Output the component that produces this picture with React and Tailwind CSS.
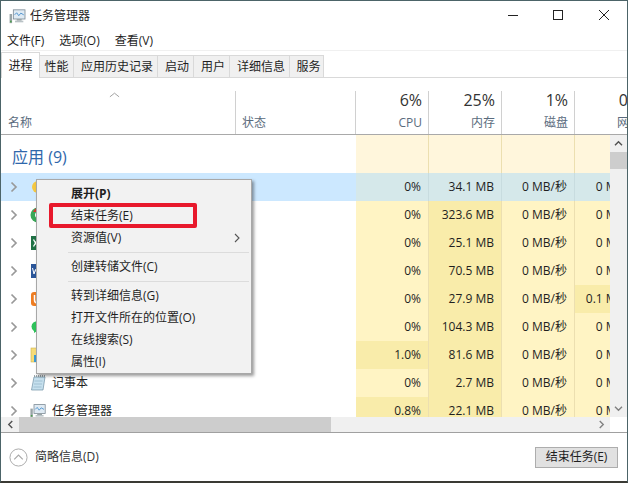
const FONT = "font-['Open_Sans','Noto_Sans_CJK_SC',sans-serif]";

const rows = [
  { name: "", cpu: "0%", mem: "34.1 MB", disk: "0 MB/秒", net: "0 Mbps", selected: true, icon: "yellow" },
  { name: "", cpu: "0%", mem: "323.6 MB", disk: "0 MB/秒", net: "0 Mbps", memDark: true, icon: "chrome" },
  { name: "", cpu: "0%", mem: "25.1 MB", disk: "0 MB/秒", net: "0 Mbps", memDark: true, icon: "excel" },
  { name: "", cpu: "0%", mem: "70.5 MB", disk: "0 MB/秒", net: "0 Mbps", memDark: true, icon: "word" },
  { name: "", cpu: "0%", mem: "27.9 MB", disk: "0 MB/秒", net: "0.1 Mbps", memDark: true, netDark: true, icon: "orange" },
  { name: "", cpu: "0%", mem: "104.3 MB", disk: "0 MB/秒", net: "0 Mbps", memDark: true, icon: "wechat" },
  { name: "", cpu: "1.0%", mem: "81.6 MB", disk: "0 MB/秒", net: "0 Mbps", memDark: true, cpuDark: true, icon: "folder" },
  { name: "记事本", cpu: "0%", mem: "2.7 MB", disk: "0 MB/秒", net: "0 Mbps", memDark: true, icon: "notepad" },
  { name: "任务管理器", cpu: "0.8%", mem: "22.1 MB", disk: "0 MB/秒", net: "0 Mbps", memDark: true, cpuDark: true, icon: "taskmgr" },
];

function TaskIcon({ className }) {
  return (
    <svg viewBox="0 0 20 18" className={className}>
      <rect x="0.5" y="6" width="3" height="11" fill="#9aa5a8" />
      <rect x="1" y="14" width="2" height="2" fill="#4d9e4d" />
      <rect x="5" y="1" width="14" height="11" fill="#dfeaf3" stroke="#7d8b96" />
      <path d="M6.5 7 L9 4.5 L11.5 8 L14 5 L17.5 7" fill="none" stroke="#3a86c8" strokeWidth="1" />
      <rect x="9" y="12" width="6" height="2" fill="#9aa5a8" />
      <rect x="7" y="14" width="10" height="2" fill="#b9c2c6" />
    </svg>
  );
}

function RowIcon({ type }) {
  const c = "w-4 h-4 shrink-0";
  switch (type) {
    case "yellow":
      return (
        <svg viewBox="0 0 16 16" className={c}>
          <circle cx="8" cy="8" r="6" fill="#f5c842" />
        </svg>
      );
    case "chrome":
      return (
        <svg viewBox="0 0 16 16" className={c}>
          <circle cx="8" cy="8" r="7.5" fill="#3aa757" />
          <path d="M8 .5A7.5 7.5 0 0 1 15 5H3A7.5 7.5 0 0 1 8 .5Z" fill="#d9382e" />
          <circle cx="8" cy="8" r="3" fill="#fff" />
        </svg>
      );
    case "excel":
      return (
        <svg viewBox="0 0 16 16" className={c}>
          <rect x="1" y="1" width="14" height="14" fill="#1f7145" />
          <path d="M3.5 4.5 L7.5 11.5 M7.5 4.5 L3.5 11.5" stroke="#fff" strokeWidth="1.3" />
        </svg>
      );
    case "word":
      return (
        <svg viewBox="0 0 16 16" className={c}>
          <rect x="1" y="1" width="14" height="14" fill="#2b5699" />
          <path d="M2.5 5 L4 11 L5.5 6.5 L7 11 L8.5 5" fill="none" stroke="#fff" strokeWidth="1" />
        </svg>
      );
    case "orange":
      return (
        <svg viewBox="0 0 16 16" className={c}>
          <rect x="1" y="1" width="14" height="14" rx="3" fill="#ee7d22" />
          <path d="M4.5 4 V9 A3 3 0 0 0 10.5 9 V4" fill="none" stroke="#fff" strokeWidth="1.5" />
        </svg>
      );
    case "wechat":
      return (
        <svg viewBox="0 0 16 16" className={c}>
          <ellipse cx="8" cy="7.5" rx="6.5" ry="5.5" fill="#2fc25b" />
          <path d="M4 11 L4 14 L7 12 Z" fill="#2fc25b" />
        </svg>
      );
    case "folder":
      return (
        <svg viewBox="0 0 16 16" className={c}>
          <rect x="1" y="1" width="13" height="14" fill="#f7dc78" stroke="#cdb44f" strokeWidth="0.6" />
          <rect x="4" y="8" width="6" height="7" fill="#3b9ad6" />
        </svg>
      );
    case "notepad":
      return (
        <svg viewBox="0 0 16 16" className={c}>
          <path d="M4 2 H15 L13 15 H1.5 Z" fill="#c6e0ee" stroke="#6f8fa3" strokeWidth="0.7" />
          <path d="M4 1 H15" stroke="#7f8c93" strokeWidth="1.4" strokeDasharray="1 1" />
          <path d="M4.5 6 H12.5 M4 9 H12 M3.5 12 H11.5" stroke="#8fb2c6" strokeWidth="0.7" />
        </svg>
      );
    default:
      return <TaskIcon className={c} />;
  }
}

function Chevron() {
  return (
    <svg viewBox="0 0 8 12" className="w-2 h-3 shrink-0">
      <path d="M1.5 1.5 L6 6 L1.5 10.5" fill="none" stroke="#999999" strokeWidth="1.7" />
    </svg>
  );
}

function Cell({ width, bg, border = "border-[#ecdcaa]", children }) {
  return (
    <div className={`${width} ${bg} ${border} h-full shrink-0 border-r flex items-center justify-end pr-[7px] text-[12px] text-[#1f1f1f] whitespace-nowrap`}>
      {children}
    </div>
  );
}

function Row({ r }) {
  const base = r.selected ? "bg-[#d5e8ea]" : "bg-[#fff4c4]";
  const dark = r.selected ? "bg-[#d5e8ea]" : "bg-[#f9ecaa]";
  const border = r.selected ? "border-[#c8dcdf]" : "border-[#ecdfb0]";
  return (
    <div className="flex h-[28px] shrink-0">
      <div className={`w-[355px] shrink-0 flex items-center pl-[9px] ${r.selected ? "bg-[#cce8ff]" : "bg-white"}`}>
        <Chevron />
        <div className="w-[12px]" />
        <div className="w-[22px] flex justify-start">
          <RowIcon type={r.icon} />
        </div>
        <span className="text-[12px] text-[#1f1f1f]">{r.name}</span>
      </div>
      <Cell width="w-[73px]" bg={r.cpuDark ? dark : base} border={border}>{r.cpu}</Cell>
      <Cell width="w-[73px]" bg={r.memDark ? dark : base} border={border}>{r.mem}</Cell>
      <Cell width="w-[73px]" bg={base} border={border}>{r.disk}</Cell>
      <div className={`w-[73px] shrink-0 h-full flex items-center justify-end pr-[11px] text-[12px] text-[#1f1f1f] whitespace-nowrap ${r.netDark ? dark : base}`}>
        {r.net}
      </div>
    </div>
  );
}

function HeadCol({ big, small, last }) {
  return (
    <div className="w-[73px] shrink-0 h-full relative pr-[7px] text-right">
      {!last && <div className="absolute right-0 top-[13px] bottom-0 w-px bg-[#d0d0d0]" />}
      <div className="text-[16px] leading-[20px] pt-[12px] text-[#333] whitespace-nowrap">{big}</div>
      <div className="text-[12px] leading-[16px] mt-[5px] text-[#5a6b7d] whitespace-nowrap">{small}</div>
    </div>
  );
}

function Tab({ children, active, width }) {
  return active ? (
    <div className={`${width} h-[26px] flex items-center justify-center bg-white border-t border-x border-[#d9d9d9] text-[12px] text-[#1f1f1f] -mb-px z-10 mt-[-2px]`}>
      {children}
    </div>
  ) : (
    <div className={`${width} h-[22px] pt-[1px] flex items-center justify-center bg-[#f0f0f0] border-t border-r border-[#d9d9d9] text-[12px] text-[#1f1f1f]`}>
      {children}
    </div>
  );
}

function MenuItem({ children, bold, arrow }) {
  return (
    <div className={`h-[22px] flex items-center pl-[34px] pr-[11px] text-[12px] text-[#1f1f1f] whitespace-nowrap ${bold ? "font-bold" : ""}`}>
      <span className="flex-1">{children}</span>
      {arrow && (
        <svg viewBox="0 0 6 10" className="w-[6px] h-[10px]">
          <path d="M1 1 L5 5 L1 9" fill="none" stroke="#555" strokeWidth="1.1" />
        </svg>
      )}
    </div>
  );
}

function MenuSep() {
  return <div className="h-px bg-[#dcdcdc] ml-[31px] mr-[2px] my-[3px]" />;
}

export default function App() {
  return (
    <div className={`${FONT} relative w-[628px] h-[483px] bg-white overflow-hidden flex flex-col border-t border-x border-[#4c6468] border-b-2 border-b-[#3a3a34]`}>
      {/* Title bar */}
      <div className="h-[30px] shrink-0 flex items-center pl-[8px]">
        <TaskIcon className="w-[17px] h-[15px]" />
        <span className="ml-[4px] text-[12px] text-[#1f1f1f]">任务管理器</span>
        <div className="flex-1" />
        <div className="flex items-center">
          <svg viewBox="0 0 46 30" className="w-[46px] h-[30px]"><path d="M19 14.5H29" stroke="#222" /></svg>
          <svg viewBox="0 0 46 30" className="w-[46px] h-[30px]"><rect x="18.5" y="9.5" width="9" height="9" fill="none" stroke="#222" /></svg>
          <svg viewBox="0 0 46 30" className="w-[46px] h-[30px]"><path d="M18 9 L28 19 M28 9 L18 19" stroke="#222" /></svg>
        </div>
      </div>
      {/* Menu bar */}
      <div className="h-[20px] shrink-0 flex items-center pl-[6px] gap-[15px] text-[12px] text-[#1f1f1f] border-b border-[#f0f0f0]">
        <span>文件(F)</span>
        <span>选项(O)</span>
        <span>查看(V)</span>
      </div>
      {/* Tabs */}
      <div className="h-[27px] shrink-0 flex items-end border-b border-[#d9d9d9]">
        <Tab active width="w-[39px]">进程</Tab>
        <Tab width="w-[34px]">性能</Tab>
        <Tab width="w-[84px] pl-[3px]">应用历史记录</Tab>
        <Tab width="w-[36px] pl-[3px]">启动</Tab>
        <Tab width="w-[36px] pl-[3px]">用户</Tab>
        <Tab width="w-[60px] pl-[3px]">详细信息</Tab>
        <Tab width="w-[34px] pl-[4px]">服务</Tab>
      </div>
      {/* Column header */}
      <div className="h-[57px] shrink-0 flex border-b border-[#a9a9a9]">
        <div className="w-[235px] shrink-0 relative pl-[7px]">
          <div className="absolute right-0 top-[13px] bottom-0 w-px bg-[#d0d0d0]" />
          <svg viewBox="0 0 12 6" className="absolute left-[108px] top-[14px] w-[11px] h-[6px]">
            <path d="M1 5 L6 1 L11 5" fill="none" stroke="#9a9a9a" strokeWidth="1" />
          </svg>
          <div className="text-[12px] leading-[16px] mt-[37px] text-[#5a6b7d]">名称</div>
        </div>
        <div className="w-[120px] shrink-0 relative pl-[6px]">
          <div className="absolute right-0 top-[13px] bottom-0 w-px bg-[#d0d0d0]" />
          <div className="text-[12px] leading-[16px] mt-[37px] text-[#5a6b7d]">状态</div>
        </div>
        <HeadCol big="6%" small="CPU" />
        <HeadCol big="25%" small="内存" />
        <HeadCol big="1%" small="磁盘" />
        <HeadCol big="0%" small="网络" last />
      </div>
      {/* Body */}
      <div className="flex-1 min-h-0 flex">
        <div className="flex-1 min-w-0 flex flex-col">
          <div className="flex-1 min-h-0 overflow-hidden flex flex-col">
            <div className="flex h-[38px] shrink-0">
              <div className="w-[355px] shrink-0 flex items-center pl-[11px] pt-[6px] text-[16px] text-[#2f67ab]">应用 (9)</div>
              <div className="w-[73px] shrink-0 bg-[#fff6dc] border-r border-[#ecdfb0]" />
              <div className="w-[73px] shrink-0 bg-[#fff6dc] border-r border-[#ecdfb0]" />
              <div className="w-[73px] shrink-0 bg-[#fff6dc] border-r border-[#ecdfb0]" />
              <div className="w-[73px] shrink-0 bg-[#fff6dc]" />
            </div>
            {rows.map((r, i) => (
              <Row key={i} r={r} />
            ))}
          </div>
          {/* Horizontal scrollbar */}
          <div className="h-[15px] shrink-0 flex items-center bg-[#f0f0f0]">
            <div className="w-[18px] flex justify-center">
              <svg viewBox="0 0 8 10" className="w-[7px] h-[9px]"><path d="M6 1 L2 5 L6 9" fill="none" stroke="#505050" strokeWidth="1.6" /></svg>
            </div>
            <div className="w-[312px] h-full bg-[#cdcdcd]" />
            <div className="flex-1" />
            <div className="w-[18px] flex justify-center">
              <svg viewBox="0 0 8 10" className="w-[7px] h-[9px]"><path d="M2 1 L6 5 L2 9" fill="none" stroke="#808080" strokeWidth="1.6" /></svg>
            </div>
          </div>
        </div>
        {/* Vertical scrollbar */}
        <div className="w-[17px] shrink-0 flex flex-col bg-[#f0f0f0]">
          <div className="h-[17px] flex items-center justify-center">
            <svg viewBox="0 0 10 8" className="w-[9px] h-[7px]"><path d="M1 6 L5 2 L9 6" fill="none" stroke="#505050" strokeWidth="1.6" /></svg>
          </div>
          <div className="h-[17px] bg-[#cdcdcd]" />
          <div className="flex-1" />
          <div className="h-[17px] pb-[1px] flex items-center justify-center">
            <svg viewBox="0 0 10 8" className="w-[9px] h-[7px]"><path d="M1 2 L5 6 L9 2" fill="none" stroke="#808080" strokeWidth="1.6" /></svg>
          </div>
          <div className="h-[15px] bg-white" />
        </div>
      </div>
      {/* Footer */}
      <div className="h-[49px] shrink-0 border-t border-[#a0a0a0] flex items-center pl-[8px] pr-[9px]">
        <svg viewBox="0 0 20 20" className="w-[19px] h-[19px]">
          <circle cx="10" cy="10" r="9" fill="none" stroke="#a8a8a8" />
          <path d="M5.5 12 L10 7.5 L14.5 12" fill="none" stroke="#a8a8a8" strokeWidth="1.2" />
        </svg>
        <span className="ml-[7px] text-[12px] text-[#333]">简略信息(D)</span>
        <div className="flex-1" />
        <div className="w-[83px] h-[21px] bg-[#e1e1e1] border border-[#adadad] flex items-center justify-center text-[12px] text-[#1f1f1f] whitespace-nowrap">
          结束任务(E)
        </div>
      </div>
      {/* Context menu */}
      <div className="absolute left-[35px] top-[178px] w-[216px] bg-[#f2f2f2] border border-[#a8a8a8] shadow-[2px_2px_3px_rgba(0,0,0,0.4)] pt-[3px]">
        <MenuItem bold>展开(P)</MenuItem>
        <MenuItem>结束任务(E)</MenuItem>
        <MenuItem arrow>资源值(V)</MenuItem>
        <MenuSep />
        <MenuItem>创建转储文件(C)</MenuItem>
        <MenuSep />
        <MenuItem>转到详细信息(G)</MenuItem>
        <MenuItem>打开文件所在的位置(O)</MenuItem>
        <MenuItem>在线搜索(S)</MenuItem>
        <MenuItem>属性(I)</MenuItem>
      </div>
      {/* Red highlight */}
      <div className="absolute left-[48px] top-[202px] w-[148px] h-[25px] border-[4px] border-[#e8192c] rounded-[2px]" />
    </div>
  );
}
